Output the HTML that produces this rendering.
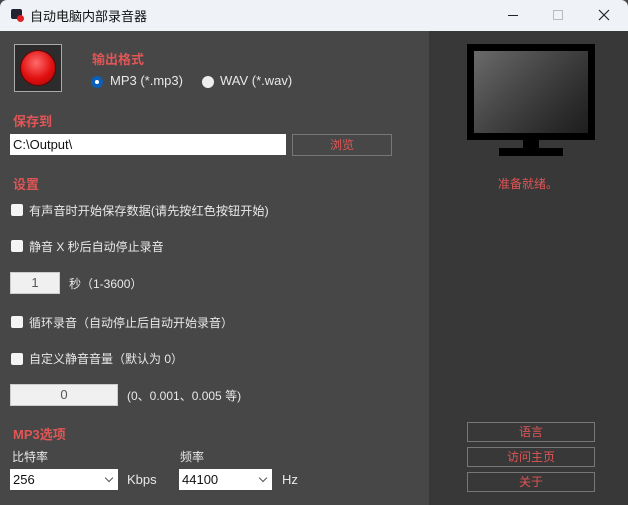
<!DOCTYPE html>
<html><head><meta charset="utf-8"><style>
*{margin:0;padding:0;box-sizing:border-box}
body{width:628px;height:505px;overflow:hidden;background:#474747;font-family:"Liberation Sans","Noto Sans CJK SC",sans-serif;font-size:12px;color:#e8e8e8;position:relative}
.a{position:absolute;white-space:nowrap}
.red{color:#e05555;font-weight:bold;font-size:13px}
.cb{position:absolute;width:12px;height:12px;background:#f4f4f4;border-radius:2px}
.inp{position:absolute;background:#f0f0f0;border:1px solid #ccc;color:#555;text-align:center;font-size:13px;line-height:19px}
.btn{position:absolute;border:1px solid #777;color:#e05555;text-align:center;font-size:12px}
.sel{position:absolute;background:#fff;color:#111;font-size:13px;line-height:21px;padding-left:3px}
.sel::after{content:"";position:absolute;right:6px;top:6px;width:5px;height:5px;border-right:1px solid #555;border-bottom:1px solid #555;transform:rotate(45deg)}
</style></head><body>
<div class="a" style="left:0;top:0;width:628px;height:31px;background:#eff3f8;border-radius:7px 7px 0 0"></div>
<div class="a" style="left:11px;top:9px;width:11px;height:10px;background:#223;border-radius:2px"></div>
<div class="a" style="left:17px;top:15px;width:7px;height:7px;background:#e02020;border-radius:50%"></div>
<div class="a" style="left:30px;top:6px;color:#111;font-size:13px">自动电脑内部录音器</div>
<div class="a" style="left:508px;top:15px;width:10px;height:1px;background:#222"></div>
<div class="a" style="left:553px;top:10px;width:10px;height:10px;border:1px solid #bbb"></div>
<svg class="a" style="left:598px;top:9px" width="12" height="12"><path d="M1 1L11 11M11 1L1 11" stroke="#222" stroke-width="1.2"/></svg>
<div class="a" style="left:429px;top:31px;width:199px;height:474px;background:#383838"></div>
<div class="a" style="left:14px;top:44px;width:48px;height:48px;background:#2c2c2c;border:1px solid #aaa"></div>
<div class="a" style="left:21px;top:51px;width:34px;height:34px;border-radius:50%;background:radial-gradient(circle at 45% 35%,#ff6a6a,#e01010 55%,#a00);box-shadow:0 0 0 1px #600"></div>
<div class="a red" style="left:92px;top:49px">输出格式</div>
<div class="a" style="left:91px;top:76px;width:12px;height:12px;border-radius:50%;background:#0a5fb8"></div>
<div class="a" style="left:95px;top:80px;width:4px;height:4px;border-radius:50%;background:#fff"></div>
<div class="a" style="left:110px;top:73px;font-size:13px">MP3 (*.mp3)</div>
<div class="a" style="left:202px;top:76px;width:12px;height:12px;border-radius:50%;background:#eee"></div>
<div class="a" style="left:220px;top:73px;font-size:13px">WAV (*.wav)</div>
<div class="a red" style="left:13px;top:111px">保存到</div>
<div class="a" style="left:10px;top:134px;width:276px;height:21px;background:#fff;color:#111;font-size:13px;line-height:21px;padding-left:3px">C:\Output\</div>
<div class="btn" style="left:292px;top:134px;width:100px;height:22px;line-height:20px">浏览</div>
<div class="a red" style="left:13px;top:174px">设置</div>
<div class="cb" style="left:11px;top:204px"></div><div class="a" style="left:29px;top:201px;font-size:12.2px">有声音时开始保存数据(请先按红色按钮开始)</div>
<div class="cb" style="left:11px;top:240px"></div><div class="a" style="left:29px;top:238px">静音 X 秒后自动停止录音</div>
<div class="inp" style="left:10px;top:272px;width:50px;height:22px">1</div>
<div class="a" style="left:69px;top:275px">秒（1-3600）</div>
<div class="cb" style="left:11px;top:316px"></div><div class="a" style="left:29px;top:314px">循环录音（自动停止后自动开始录音）</div>
<div class="cb" style="left:11px;top:353px"></div><div class="a" style="left:29px;top:350px">自定义静音音量（默认为 0）</div>
<div class="inp" style="left:10px;top:384px;width:108px;height:22px">0</div>
<div class="a" style="left:127px;top:387px">(0、0.001、0.005 等)</div>
<div class="a red" style="left:13px;top:424px">MP3选项</div>
<div class="a" style="left:12px;top:448px">比特率</div>
<div class="a" style="left:180px;top:448px">频率</div>
<div class="sel" style="left:10px;top:469px;width:108px;height:21px">256</div>
<div class="a" style="left:127px;top:472px;font-size:13px">Kbps</div>
<div class="sel" style="left:179px;top:469px;width:93px;height:21px">44100</div>
<div class="a" style="left:282px;top:472px;font-size:13px">Hz</div>
<div class="a" style="left:467px;top:44px;width:128px;height:96px;background:#000"></div>
<div class="a" style="left:474px;top:51px;width:114px;height:82px;background:linear-gradient(135deg,#6a6a6a,#444 45%,#2a2a2a 80%,#1e1e1e)"></div>
<div class="a" style="left:523px;top:139px;width:16px;height:9px;background:#000"></div>
<div class="a" style="left:499px;top:148px;width:64px;height:8px;background:#000"></div>
<div class="a" style="left:498px;top:175px;color:#e05555;font-size:12px">准备就绪。</div>
<div class="btn" style="left:467px;top:422px;width:128px;height:20px;line-height:18px">语言</div>
<div class="btn" style="left:467px;top:447px;width:128px;height:20px;line-height:18px">访问主页</div>
<div class="btn" style="left:467px;top:472px;width:128px;height:20px;line-height:18px">关于</div>
</body></html>
